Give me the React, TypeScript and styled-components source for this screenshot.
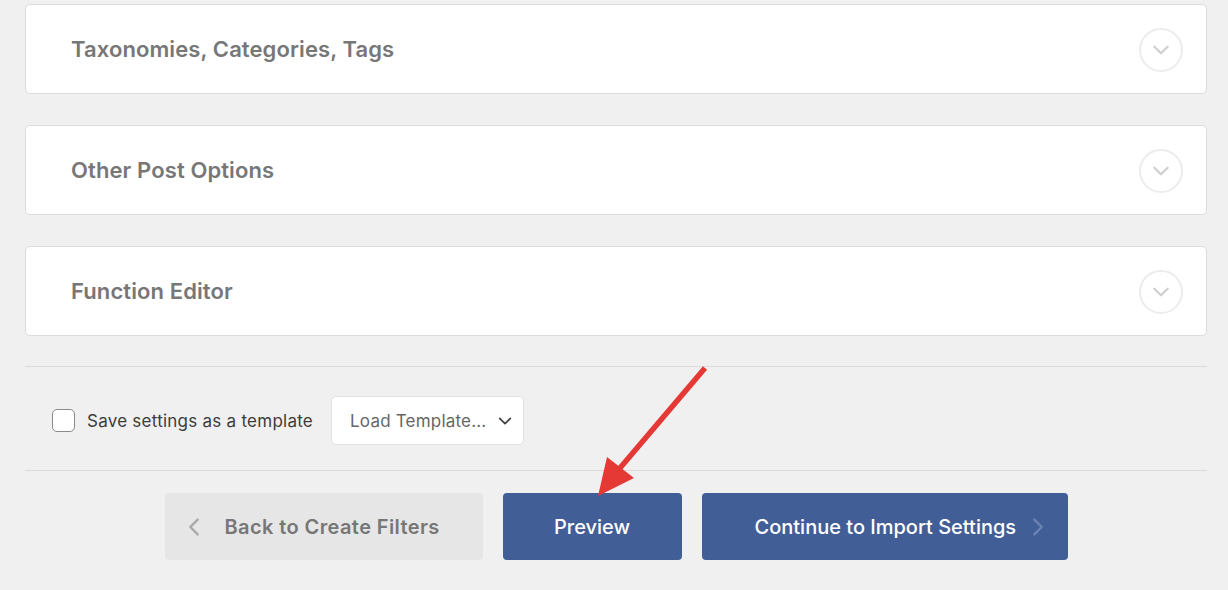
import React from "react";
import styled, { createGlobalStyle } from "styled-components";

const Global = createGlobalStyle`
  html, body { margin: 0; padding: 0; background: #f0f0f0; }
  body { font-family: Inter, "Liberation Sans", Arial, sans-serif; }
  * { box-sizing: border-box; }
`;

const Page = styled.div`
  position: relative;
  width: 1228px;
  height: 590px;
  overflow: hidden;
  padding: 4px 21px 0 25px;
  background: #f0f0f0;
`;

const Cards = styled.div`
  display: flex;
  flex-direction: column;
  gap: 31px;
`;

const Card = styled.div`
  height: 90px;
  background: #fff;
  border: 1px solid #dcdcdc;
  border-radius: 5px;
  display: flex;
  align-items: center;
  justify-content: space-between;
  padding: 0 23px 0 45px;
`;

const CardTitle = styled.h3`
  margin: 0;
  font-size: 22px;
  font-weight: 600;
  letter-spacing: 0.1px;
  color: #777;
`;

const Toggle = styled.span`
  width: 44px;
  height: 44px;
  margin-top: 2px;
  border-radius: 50%;
  border: 2px solid #ececec;
  display: flex;
  align-items: center;
  justify-content: center;
`;

const Divider = styled.hr<{ $top?: number }>`
  margin: ${(p) => p.$top ?? 0}px 0 0;
  border: none;
  border-top: 1px solid #dadada;
`;

const SettingsRow = styled.div`
  height: 103px;
  display: flex;
  align-items: center;
  padding: 4px 0 0 27px;
  gap: 18px;
`;

const CheckLabel = styled.label`
  display: flex;
  align-items: center;
  gap: 12px;
  font-size: 17px;
  letter-spacing: 0.25px;
  color: #3c3c3c;
`;

const Checkbox = styled.span`
  width: 23px;
  height: 23px;
  border: 1.5px solid #8a8a8a;
  border-radius: 5px;
  background: #fff;
`;

const Select = styled.div`
  width: 193px;
  height: 49px;
  background: #fff;
  border: 1px solid #e2e2e2;
  border-radius: 5px;
  display: flex;
  align-items: center;
  justify-content: space-between;
  padding: 0 10px 0 18px;
  font-size: 17px;
  letter-spacing: 0.2px;
  color: #666;
`;

const ButtonRow = styled.div`
  display: flex;
  justify-content: center;
  gap: 20px;
  padding-top: 22px;
`;

const Button = styled.button<{ $variant: "ghost" | "primary"; $w: number; $pl?: number; $gap?: number }>`
  width: ${(p) => p.$w}px;
  height: 67px;
  border: none;
  border-radius: 4px;
  display: flex;
  align-items: center;
  justify-content: ${(p) => (p.$pl != null ? "flex-start" : "center")};
  padding: 0 0 0 ${(p) => p.$pl ?? 0}px;
  gap: ${(p) => p.$gap ?? 20}px;
  font-family: Inter, "Liberation Sans", Arial, sans-serif;
  font-size: 20px;
  font-weight: ${(p) => (p.$variant === "ghost" ? 600 : 500)};
  letter-spacing: ${(p) => (p.$variant === "ghost" ? 0.4 : 0)}px;
  background: ${(p) => (p.$variant === "ghost" ? "#e6e6e6" : "#425e97")};
  color: ${(p) => (p.$variant === "ghost" ? "#777" : "#fff")};
`;

const Arrow = styled.svg`
  position: absolute;
  left: 590px;
  top: 360px;
  pointer-events: none;
`;

const Chevron = ({ color, dir, size = 14 }: { color: string; dir: "down" | "left" | "right"; size?: number }) => {
  const d =
    dir === "down" ? "M3 6 L9 12 L15 6" : dir === "left" ? "M12 3 L6 9 L12 15" : "M6 3 L12 9 L6 15";
  return (
    <svg width={size} height={size} viewBox="0 0 18 18">
      <path d={d} fill="none" stroke={color} strokeWidth="2" strokeLinecap="round" strokeLinejoin="round" />
    </svg>
  );
};

const sections = ["Taxonomies, Categories, Tags", "Other Post Options", "Function Editor"];

export default function App() {
  return (
    <>
      <Global />
      <Page>
        <Cards>
          {sections.map((s) => (
            <Card key={s}>
              <CardTitle>{s}</CardTitle>
              <Toggle>
                <Chevron color="#cfcfcf" dir="down" size={20} />
              </Toggle>
            </Card>
          ))}
        </Cards>
        <Divider $top={30} />
        <SettingsRow>
          <CheckLabel>
            <Checkbox />
            Save settings as a template
          </CheckLabel>
          <Select>
            Load Template...
            <Chevron color="#444" dir="down" size={16} />
          </Select>
        </SettingsRow>
        <Divider />
        <ButtonRow>
          <Button $variant="ghost" $w={318} $pl={18} $gap={20}>
            <Chevron color="#aaa" dir="left" size={22} />
            Back to Create Filters
          </Button>
          <Button $variant="primary" $w={179}>Preview</Button>
          <Button $variant="primary" $w={366} $pl={53} $gap={11}>
            Continue to Import Settings
            <Chevron color="#6b82b3" dir="right" size={22} />
          </Button>
        </ButtonRow>
        <Arrow width="130" height="145" viewBox="0 0 130 145">
          <line x1="115" y1="8" x2="30" y2="108" stroke="#e53935" strokeWidth="5.5" strokeLinecap="butt" />
          <polygon points="8,136 17,97 44,118" fill="#e53935" />
        </Arrow>
      </Page>
    </>
  );
}
